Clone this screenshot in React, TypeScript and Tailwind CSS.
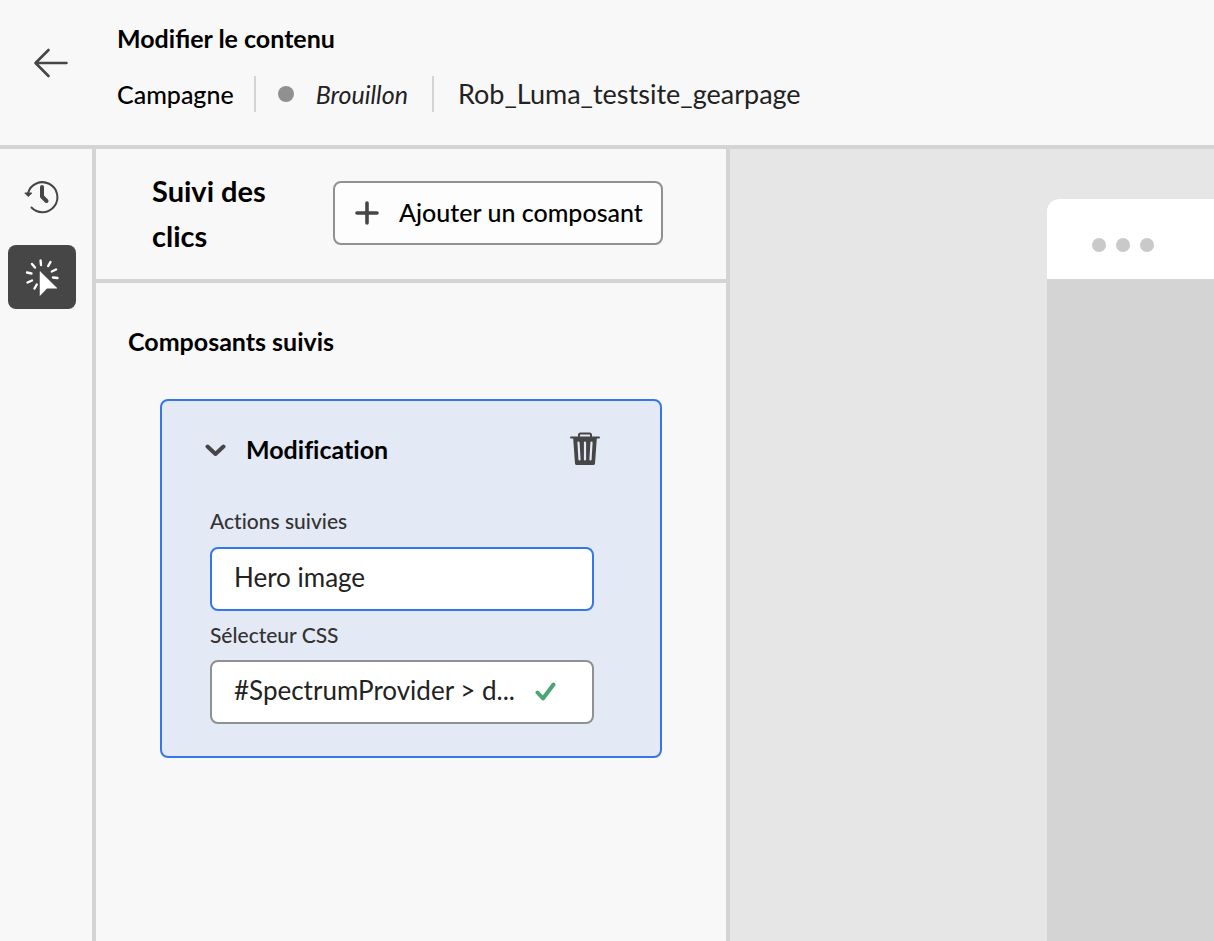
import { useState } from "react";

function BackIcon() {
  return (
    <svg width="36" height="30" viewBox="0 0 36 30" fill="none" stroke="#464646" strokeWidth="2.6" strokeLinecap="round" strokeLinejoin="round" aria-hidden="true">
      <path d="M15.500 2 2.500 15l13 13M2.500 15h31" />
    </svg>
  );
}

function HistoryIcon() {
  return (
    <svg width="36" height="36" viewBox="0 0 36 36" fill="none" aria-hidden="true">
      <path d="M4 14A15 15 0 1 1 7.500 28.500" stroke="#464646" strokeWidth="2" strokeLinecap="round" />
      <path d="M.8 14h7L4.300 17.500Z" fill="#464646" stroke="#464646" strokeWidth="1" strokeLinejoin="round" />
      <path d="M18 8v9.500l4.500 4.500" stroke="#464646" strokeWidth="4" strokeLinecap="round" strokeLinejoin="round" />
    </svg>
  );
}

function ClickIcon() {
  return (
    <svg width="36" height="40" viewBox="0 0 36 40" aria-hidden="true">
      <path d="M16.600 3.500l.4 4.500M8 7l3 3.500M3 15.500l4.500 1M3.500 25.500l4.500-2M10.500 31.500l2.300-4M26.500 5 24.200 9M32 12.500l-4.200 2M33.500 21l-4.500-.5" stroke="#fff" strokeWidth="2.4" strokeLinecap="round" />
      <path d="M16 14.500v24l7-7.300h10Z" fill="#fff" stroke="#fff" strokeWidth=".5" strokeLinejoin="round" />
    </svg>
  );
}

function PlusIcon() {
  return (
    <svg width="24" height="24" viewBox="0 0 24 24" stroke="#464646" strokeWidth="3.6" strokeLinecap="round" aria-hidden="true">
      <path d="M12 2v20M2 12h20" />
    </svg>
  );
}

function ChevronIcon() {
  return (
    <svg width="22" height="14" viewBox="0 0 22 14" fill="none" stroke="#464646" strokeWidth="4" strokeLinecap="round" strokeLinejoin="round" aria-hidden="true">
      <path d="M3.500 4.500l8 7.500 8-7.500" />
    </svg>
  );
}

function TrashIcon() {
  return (
    <svg width="30" height="34" viewBox="0 0 30 34" aria-hidden="true">
      <path d="M9 5.500V3a1.500 1.500 0 0 1 1.500-1.500h9A1.500 1.500 0 0 1 21 3v2.500" fill="none" stroke="#464646" strokeWidth="2" />
      <path d="M1 4.500h28a1 1 0 0 1 0 2h-2.200L25 31.500a1.700 1.700 0 0 1-1.700 1.500H6.700A1.700 1.700 0 0 1 5 31.500L3.200 6.500H1a1 1 0 0 1 0-2Z" fill="#464646" />
      <path d="M8.500 10.500l1 17M15 10.500v17M21.500 10.500l-1 17" stroke="#e3e9f5" strokeWidth="2.200" strokeLinecap="round" />
    </svg>
  );
}

function CheckIcon() {
  return (
    <svg className="shrink-0" width="22" height="20" viewBox="0 0 22 20" fill="none" stroke="#4aa574" strokeWidth="4" strokeLinecap="round" strokeLinejoin="round" aria-hidden="true">
      <path d="M3.500 10.500l5.500 6L19.500 2.500" />
    </svg>
  );
}

export default function App() {
  const [name, setName] = useState("Hero image");
  const [selector, setSelector] = useState("#SpectrumProvider > d...");

  return (
    <div className="flex min-h-screen flex-col bg-[#f8f8f8] font-['Lato','Noto_Sans',sans-serif] text-black">
      <header className="flex border-b-4 border-[#d4d4d4] pt-[18px] pb-[31px]">
        <a href="#" aria-label="Retour" className="flex h-[90px] w-[117px] items-center pl-[33px]">
          <BackIcon />
        </a>
        <div className="flex flex-col">
          <h1 className="text-[25px] leading-10 font-bold">Modifier le contenu</h1>
          <div className="mt-4 flex h-10 items-center text-[25px] leading-10">
            <span className="font-medium">Campagne</span>
            <span className="ml-5 h-9 w-0.5 bg-[#d4d4d4]" />
            <span className="ml-[22px] size-4 rounded-full bg-[#909090]" />
            <em className="ml-[22px] text-[#222222]">Brouillon</em>
            <span className="ml-6 h-9 w-0.5 bg-[#d4d4d4]" />
            <span className="ml-6 text-[27px] text-[#222222]">Rob_Luma_testsite_gearpage</span>
          </div>
        </div>
      </header>

      <div className="flex grow">
        <nav className="flex w-24 shrink-0 flex-col items-start gap-4 border-r-4 border-[#d4d4d4] pt-4 pl-2">
          <button type="button" aria-label="Historique" className="flex h-16 w-17 items-center justify-center rounded-lg">
            <HistoryIcon />
          </button>
          <button type="button" aria-label="Suivi des clics" aria-pressed="true" className="flex h-16 w-17 items-center justify-center rounded-lg bg-[#464646]">
            <ClickIcon />
          </button>
        </nav>

        <aside className="w-[634px] shrink-0 border-r-4 border-[#d4d4d4]">
          <div className="flex items-center justify-between border-b-4 border-[#d4d4d4] pt-[19px] pr-[63px] pb-[21px] pl-14">
            <h2 className="w-36 text-[29px] leading-[45px] font-bold">Suivi des clics</h2>
            <button type="button" className="flex h-16 w-[330px] items-center gap-5 rounded-lg border-2 border-[#909090] bg-[#fdfdfd] pl-5 text-[25px] font-medium whitespace-nowrap">
              <PlusIcon />
              Ajouter un composant
            </button>
          </div>

          <section className="px-16 pt-[38px]">
            <h3 className="-ml-8 text-[25px] leading-10 font-bold">Composants suivis</h3>
            <div className="mt-[38px] rounded-lg border-2 border-[#3577ea] bg-[#e3e9f5] px-12 pt-7 pb-8">
              <div className="-ml-1.5 flex h-10 items-center justify-between pr-3">
                <button type="button" aria-expanded="true" className="flex items-center gap-5 text-[25px] leading-10 font-bold [font-variant-ligatures:none]">
                  <ChevronIcon />
                  Modification
                </button>
                <button type="button" aria-label="Supprimer">
                  <TrashIcon />
                </button>
              </div>
              <label htmlFor="tracked" className="mt-9 block h-[42px] text-[21px] leading-8 font-medium text-[#333333] [font-variant-ligatures:none]">
                Actions suivies
              </label>
              <input
                id="tracked"
                value={name}
                onChange={(e) => setName(e.target.value)}
                className="block h-16 w-96 rounded-lg border-2 border-[#3577ea] bg-white px-[22px] pb-1 text-[26px] text-[#222222] outline-none"
              />
              <label htmlFor="selector" className="mt-2 block h-[41px] text-[21px] leading-8 font-medium text-[#333333]">
                Sélecteur CSS
              </label>
              <div className="flex h-16 w-96 items-center rounded-lg border-2 border-[#909090] bg-white pr-9 pl-[22px]">
                <input
                  id="selector"
                  value={selector}
                  onChange={(e) => setSelector(e.target.value)}
                  className="h-15 min-w-0 grow bg-transparent pb-1 text-[26px] text-[#222222] outline-none"
                />
                <CheckIcon />
              </div>
            </div>
          </section>
        </aside>

        <main className="flex grow bg-[#e6e6e6] pt-[50px] pl-[317px]">
          <div className="flex grow flex-col overflow-hidden rounded-tl-xl bg-[#d4d4d4]">
            <div className="flex h-20 items-center gap-2.5 bg-white px-[45px] pt-3">
              <span className="size-3.5 rounded-full bg-[#c9c9c9]" />
              <span className="size-3.5 rounded-full bg-[#c9c9c9]" />
              <span className="size-3.5 rounded-full bg-[#c9c9c9]" />
            </div>
          </div>
        </main>
      </div>
    </div>
  );
}
